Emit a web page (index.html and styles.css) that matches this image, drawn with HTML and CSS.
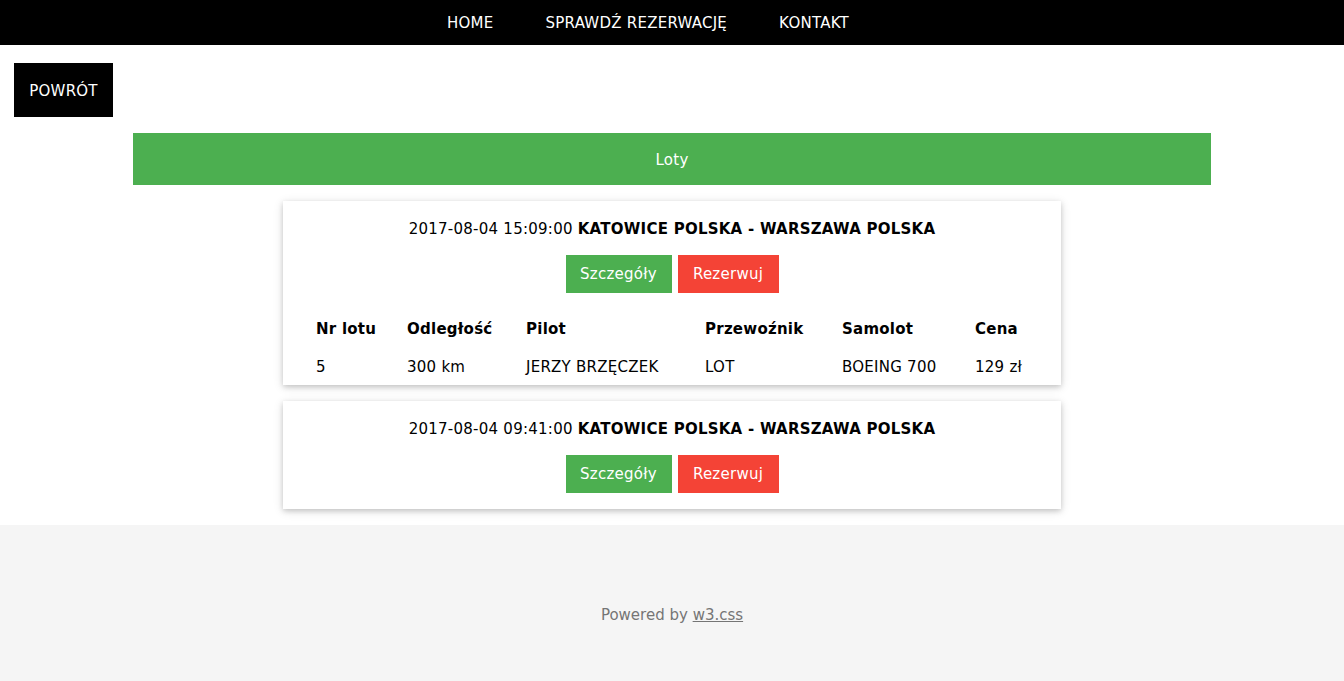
FILE: index.html
```html
<!DOCTYPE html>
<html lang="pl">
<head>
<meta charset="utf-8">
<title>Loty</title>
<link rel="stylesheet" href="styles.css">
</head>
<body>
<nav class="topbar">
  <a class="nav-item" href="#">HOME</a>
  <a class="nav-item" href="#">SPRAWDŹ REZERWACJĘ</a>
  <a class="nav-item" href="#">KONTAKT</a>
</nav>
<main class="main">
  <div class="back-row"><a class="back-btn" href="#">POWRÓT</a></div>
  <div class="section-head">Loty</div>
  <div class="cards">
    <div class="card">
      <div class="card-title">2017-08-04 15:09:00 <b>KATOWICE POLSKA - WARSZAWA POLSKA</b></div>
      <div class="actions">
        <a class="btn btn-green" href="#">Szczegóły</a>
        <a class="btn btn-red" href="#">Rezerwuj</a>
      </div>
      <div class="details">
        <div class="th">Nr lotu</div>
        <div class="th">Odległość</div>
        <div class="th">Pilot</div>
        <div class="th">Przewoźnik</div>
        <div class="th">Samolot</div>
        <div class="th">Cena</div>
        <div class="td">5</div>
        <div class="td">300 km</div>
        <div class="td">JERZY BRZĘCZEK</div>
        <div class="td">LOT</div>
        <div class="td">BOEING 700</div>
        <div class="td">129 zł</div>
      </div>
    </div>
    <div class="card card-short">
      <div class="card-title">2017-08-04 09:41:00 <b>KATOWICE POLSKA - WARSZAWA POLSKA</b></div>
      <div class="actions">
        <a class="btn btn-green" href="#">Szczegóły</a>
        <a class="btn btn-red" href="#">Rezerwuj</a>
      </div>
    </div>
  </div>
</main>
<footer class="footer">
  <p>Powered by <a href="#">w3.css</a></p>
</footer>
</body>
</html>
```

FILE: styles.css
```css
html, body {
  margin: 0;
  padding: 0;
}
body {
  font-family: "DejaVu Sans", sans-serif;
  font-size: 15px;
  color: #000;
  background: #fff;
}
a { text-decoration: none; color: inherit; }

.topbar {
  background: #000;
  height: 45px;
  display: flex;
  justify-content: center;
  align-items: center;
  padding: 1px 48px 0 0;
  box-sizing: border-box;
  letter-spacing: 0.25px;
}
.nav-item {
  color: #fff;
  padding: 0 26px;
  line-height: 44px;
}

.main {
  padding-bottom: 16px;
  letter-spacing: 0.25px;
}
.back-row {
  padding: 18px 14px 16px;
  display: flex;
}
.back-btn {
  background: #000;
  color: #fff;
  width: 99px;
  height: 54px;
  display: flex;
  align-items: center;
  justify-content: center;
  padding-top: 1px;
  box-sizing: border-box;
}

.section-head {
  width: 1078px;
  margin: 0 auto;
  height: 52px;
  background: #4CAF50;
  color: #fff;
  display: flex;
  align-items: center;
  justify-content: center;
  padding-top: 1px;
  box-sizing: border-box;
}

.cards {
  display: flex;
  flex-direction: column;
  align-items: center;
  gap: 16px;
  margin-top: 16px;
}
.card {
  width: 778px;
  background: #fff;
  box-shadow: 0 2px 5px 0 rgba(0,0,0,0.16), 0 2px 10px 0 rgba(0,0,0,0.12);
  padding-top: 16px;
}
.card-short {
  padding-bottom: 16px;
}
.card-title {
  text-align: center;
  line-height: 22px;
  padding-top: 1px;
}
.actions {
  display: flex;
  justify-content: center;
  gap: 6px;
  margin-top: 15px;
}
.btn {
  color: #fff;
  height: 38px;
  display: flex;
  align-items: center;
  justify-content: center;
}
.btn-green { background: #4CAF50; width: 106px; }
.btn-red { background: #f44336; width: 101px; }

.details {
  display: grid;
  grid-template-columns: 91px 119px 179px 137px 133px 1fr;
  margin-top: 16px;
  padding-left: 33px;
}
.th, .td {
  height: 38px;
  display: flex;
  align-items: center;
  padding-top: 1px;
  box-sizing: border-box;
}
.th { font-weight: bold; }

.footer {
  background: #f5f5f5;
  height: 157px;
  padding-top: 79px;
  box-sizing: border-box;
  text-align: center;
  font-family: "DejaVu Sans", sans-serif;
  font-size: 15px;
  color: #757575;
}
.footer p { margin: 0; line-height: 22px; }
.footer a { text-decoration: underline; }
```
